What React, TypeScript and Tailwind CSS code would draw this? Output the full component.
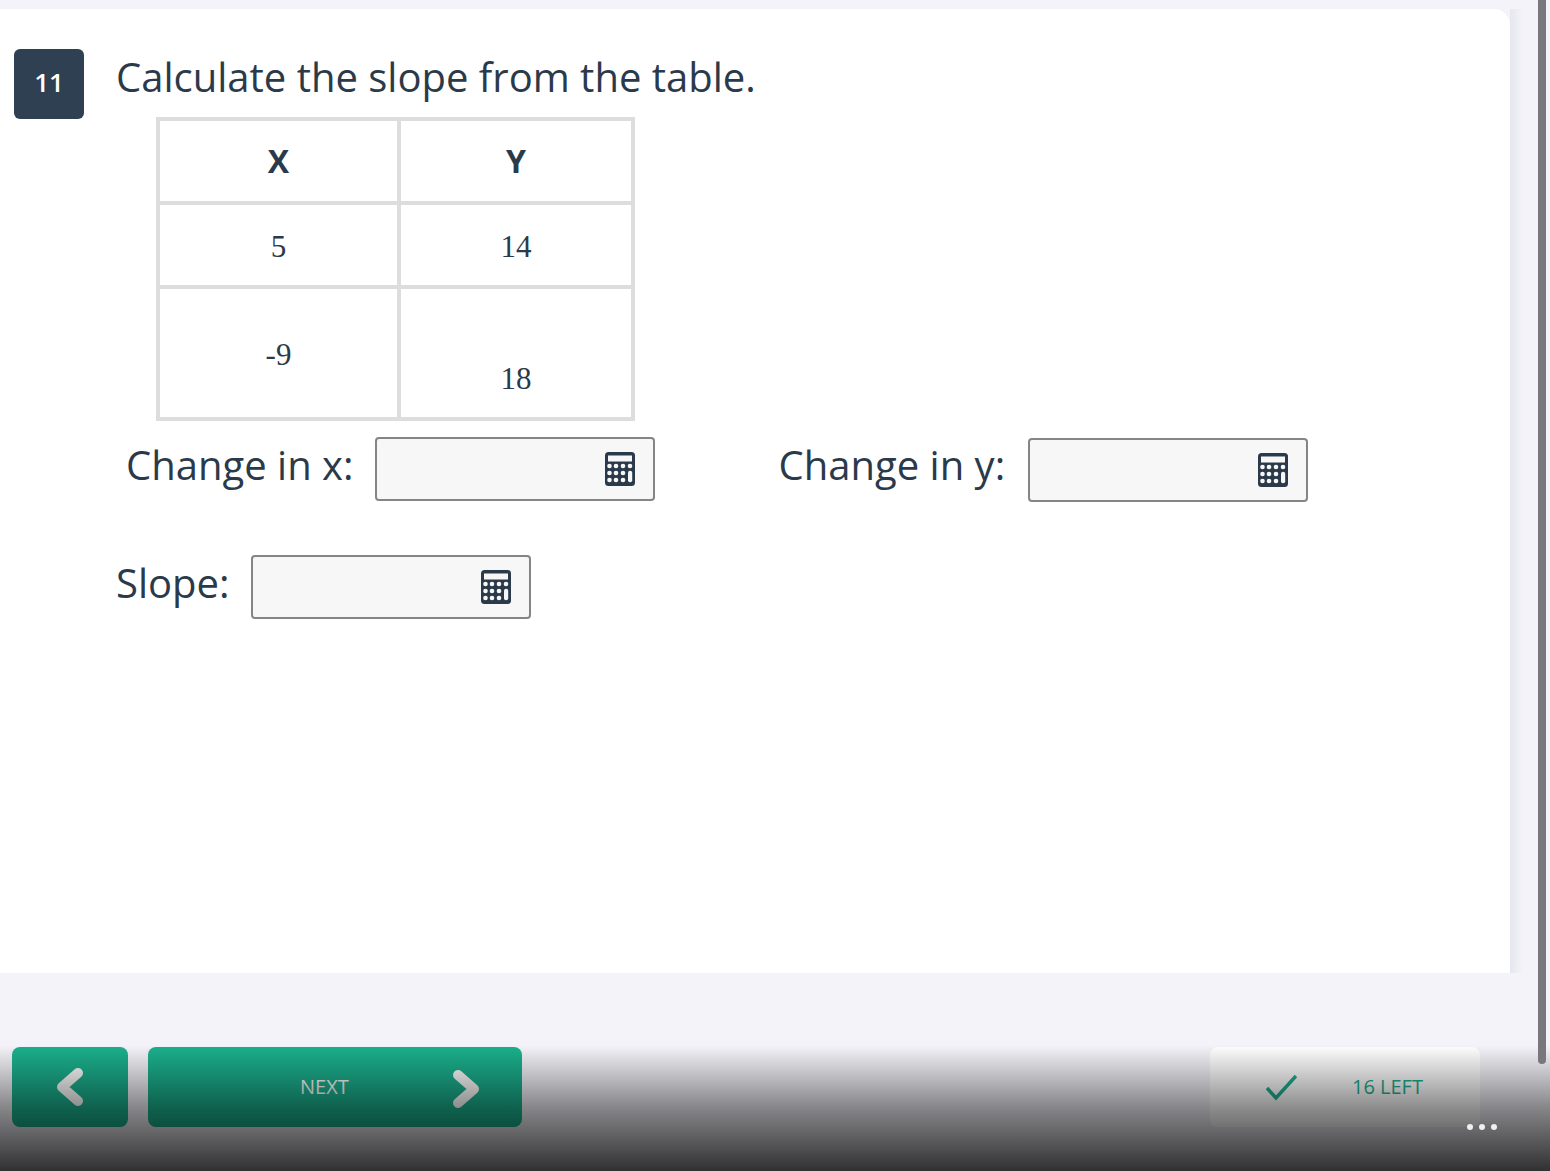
const FONT = "font-['Open_Sans',sans-serif]"

function CalculatorIcon() {
  return (
    <svg className="w-[30px] h-[34px] shrink-0" viewBox="0 0 30 34">
      <rect x="0" y="0" width="30" height="34" rx="3.5" fill="#2b3a4a" />
      <rect x="3" y="3.5" width="24" height="6" fill="#f7f7f7" />
      {[14, 21, 28].map((cy) =>
        [4.5, 11, 18].map((cx) => <circle key={`${cx}-${cy}`} cx={cx} cy={cy} r="2.3" fill="#f7f7f7" />),
      )}
      <circle cx="25" cy="14" r="2.3" fill="#f7f7f7" />
      <rect x="23" y="18.7" width="4.2" height="11.6" rx="2" fill="#f7f7f7" />
    </svg>
  )
}

function AnswerInput({ className = '' }: { className?: string }) {
  return (
    <div className={`flex items-center justify-end w-[280px] h-16 pr-[18px] bg-[#f7f7f7] border-2 border-[#858585] rounded ${className}`}>
      <CalculatorIcon />
    </div>
  )
}

function Chevron({ dir }: { dir: 'left' | 'right' }) {
  return (
    <svg className="w-7 h-10" viewBox="0 0 28 40" fill="none">
      <path
        d={dir === 'left' ? 'M22 6 L6 20 L22 34' : 'M6 6 L22 20 L6 34'}
        stroke="#ffffff"
        strokeWidth="10"
        strokeLinecap="round"
        strokeLinejoin="round"
      />
    </svg>
  )
}

export default function App() {
  const cell = 'border-4 border-[#dddddd] text-center'
  const num = "font-['Liberation_Serif',serif] text-[31px] text-[#2b3a4a]"
  const label = 'text-[40px] leading-[56px] text-[#2b3a4a]'

  return (
    <div className={`relative w-[1550px] h-[1171px] overflow-hidden bg-[#f3f3f9] pt-[9px] ${FONT}`}>
      <div className="flex h-[964px]">
        <main className="w-[1510px] bg-white rounded-tr-2xl pt-10 pl-3.5 flex gap-[33px]">
          <div className="w-[70px] h-[70px] rounded-md bg-[#2e4052] flex items-center justify-center pb-[3px] text-white font-semibold text-[26px]">
            11
          </div>

          <div>
            <h1 className={`${label} mb-3 -ml-px`}>Calculate the slope from the table.</h1>

            <table className="ml-[39px] w-[479px] h-[304px] table-fixed border-collapse">
              <colgroup>
                <col className="w-[241px]" />
                <col />
              </colgroup>
              <tbody>
                <tr className="h-[84px]">
                  <th className={`${cell} text-[32px] font-bold text-[#2b3a4a]`}>X</th>
                  <th className={`${cell} text-[32px] font-bold text-[#2b3a4a]`}>Y</th>
                </tr>
                <tr className="h-[84px]">
                  <td className={`${cell} ${num} pt-1`}>5</td>
                  <td className={`${cell} ${num} pt-1`}>14</td>
                </tr>
                <tr>
                  <td className={`${cell} ${num} pt-[5px]`}>-9</td>
                  <td className={`${cell} ${num} align-bottom pb-[15px]`}>18</td>
                </tr>
              </tbody>
            </table>

            <div className="flex mt-4 ml-[9px]">
              <div className="flex items-start gap-[21px]">
                <span className={label}>Change in x:</span>
                <AnswerInput />
              </div>
              <div className="flex items-start gap-[23px] ml-[124px]">
                <span className={label}>Change in y:</span>
                <AnswerInput className="mt-px" />
              </div>
            </div>

            <div className="flex items-start gap-[21px] mt-[53px]">
              <span className={`${label} -ml-px`}>Slope:</span>
              <AnswerInput />
            </div>
          </div>
        </main>
        <div className="w-[13px] bg-gradient-to-r from-[#e6e6ee] to-[#f3f3f9]" />
      </div>

      <footer className="flex items-start pt-[74px] pl-3">
        <button className="w-[116px] h-20 rounded-lg bg-[#1bb08d] flex items-center justify-center">
          <Chevron dir="left" />
        </button>
        <button className="relative w-[374px] h-20 ml-5 rounded-lg bg-[#1bb08d] flex items-center">
          <span className="ml-[152px] text-xl text-white">NEXT</span>
          <span className="absolute right-[42px] top-[22px]">
            <Chevron dir="right" />
          </span>
        </button>
        <button className="w-[270px] h-20 ml-[688px] rounded-lg bg-white flex items-center">
          <svg className="w-8 h-7 ml-[55px]" viewBox="0 0 32 28" fill="none">
            <path d="M2 15 L11 25 L31 3" stroke="#1fb08f" strokeWidth="3.5" />
          </svg>
          <span className="ml-[55px] text-xl text-[#1fb08f]">16 LEFT</span>
        </button>
      </footer>

      {/* dark fade over the bottom bar */}
      <div className="pointer-events-none absolute left-0 right-0 bottom-0 h-[126px] bg-gradient-to-b from-black/0 via-black/45 to-black/80" />

      {/* page scrollbar */}
      <div className="absolute top-0 left-[1538px] w-2 h-[1064px] rounded-b bg-[#77777c]" />

      {/* more menu */}
      <div className="absolute left-[1467px] top-[1124px] flex gap-1.5">
        <span className="w-1.5 h-1.5 rounded-full bg-[#f0f0f0]" />
        <span className="w-1.5 h-1.5 rounded-full bg-[#f0f0f0]" />
        <span className="w-1.5 h-1.5 rounded-full bg-[#f0f0f0]" />
      </div>
    </div>
  )
}
